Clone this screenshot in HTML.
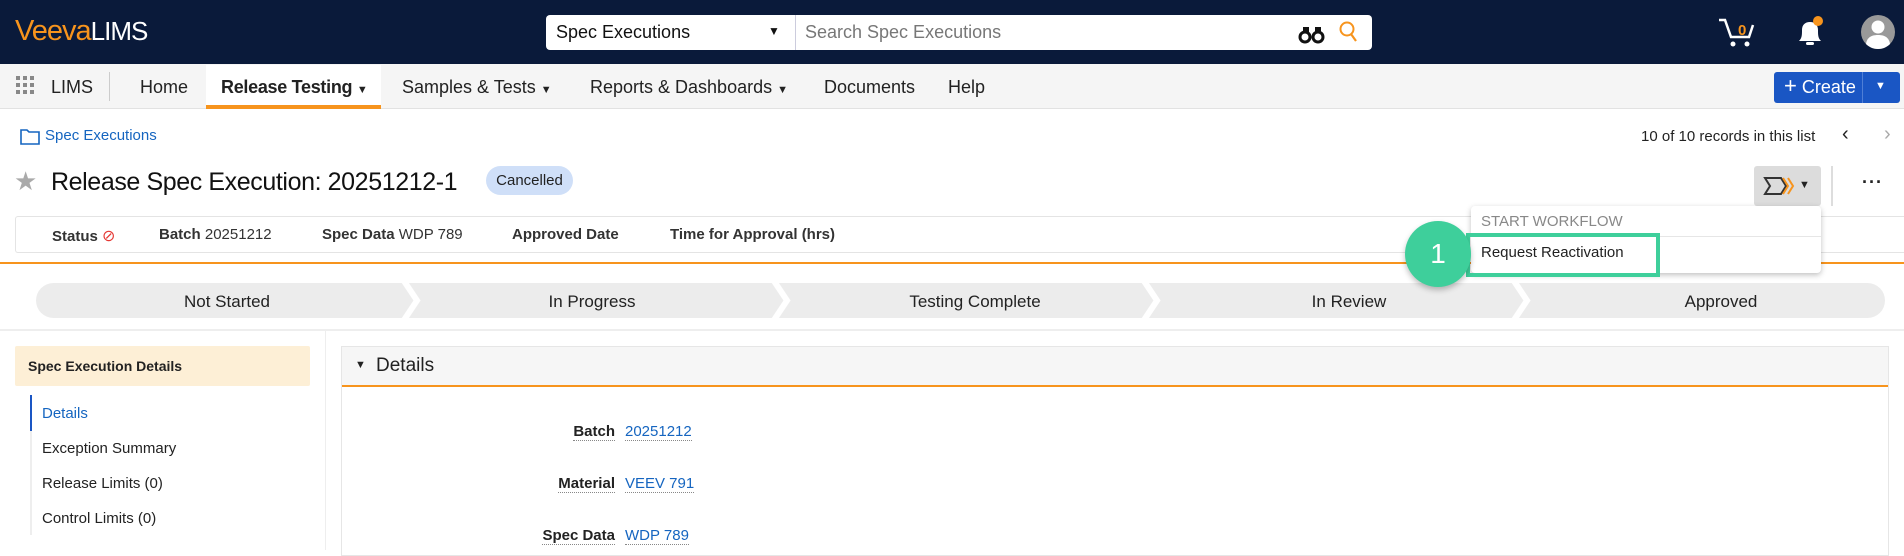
<!DOCTYPE html>
<html><head><meta charset="utf-8"><style>
*{box-sizing:border-box;margin:0;padding:0}
body{width:1904px;height:550px;overflow:hidden;background:#fff;font-family:"Liberation Sans",Arial,sans-serif;color:#222;position:relative}
.a{position:absolute;white-space:nowrap}
.hdr{left:0;top:0;width:1904px;height:64px;background:#0a1a3a}
.nav{left:0;top:64px;width:1904px;height:45px;background:#f5f5f5;border-bottom:1px solid #e2e2e2}
.nt{font-size:18px;color:#222;top:77px}
.lbl{font-size:15px;top:226px;color:#333}
.lbl b{color:#333}
.lnk{color:#1565c0}
.fl{font-size:15px;font-weight:bold;text-align:right;right:1289px;border-bottom:1px dotted #888}
.fv{font-size:15px;color:#1565c0;left:625px;border-bottom:1px dotted #888}
.li{font-size:15px;left:42px}
</style></head><body>
<div class="a hdr"></div>
<div class="a" style="left:15px;top:15px;font-size:29px;color:#f7941d;letter-spacing:-1px">Veeva<span style="color:#fff;font-size:26px;letter-spacing:-1px">LIMS</span></div>
<div class="a" style="left:546px;top:15px;width:826px;height:35px;background:#fff;border-radius:4px"></div>
<div class="a" style="left:795px;top:15px;width:1px;height:35px;background:#ccd"></div>
<div class="a" style="left:556px;top:22px;font-size:18px;color:#111">Spec Executions</div>
<div class="a" style="left:768px;top:24px;font-size:12px;color:#111">▼</div>
<div class="a" style="left:805px;top:22px;font-size:18px;color:#777">Search Spec Executions</div>
<svg class="a" style="left:1298px;top:24px" width="28" height="20" viewBox="0 0 28 20"><circle cx="7" cy="13" r="5" fill="none" stroke="#111" stroke-width="3"/><circle cx="20" cy="13" r="5" fill="none" stroke="#111" stroke-width="3"/><rect x="5" y="3" width="6" height="6" fill="#111"/><rect x="17" y="3" width="6" height="6" fill="#111"/></svg>
<svg class="a" style="left:1338px;top:20px" width="20" height="24" viewBox="0 0 20 24"><circle cx="9" cy="9" r="6.5" fill="none" stroke="#f7941d" stroke-width="2"/><line x1="13" y1="14" x2="18" y2="21" stroke="#f7941d" stroke-width="2.2"/></svg>
<svg class="a" style="left:1717px;top:17px" width="42" height="32" viewBox="0 0 42 32"><path d="M2 3h6l6 17h18l4-12" fill="none" stroke="#fff" stroke-width="2.5"/><circle cx="16" cy="27" r="2.5" fill="#fff"/><circle cx="30" cy="27" r="2.5" fill="#fff"/><text x="21" y="18" font-size="15" font-weight="bold" fill="#f7941d" font-family="Liberation Sans">0</text></svg>
<svg class="a" style="left:1795px;top:15px" width="30" height="34" viewBox="0 0 30 34"><path d="M4 26c3-3 3-6 3-11c0-5 3-8 8-8s8 3 8 8c0 5 0 8 3 11z" fill="#fff"/><rect x="11" y="27" width="8" height="3" rx="1.5" fill="#fff"/><circle cx="23" cy="6" r="5" fill="#f7941d"/></svg>
<svg class="a" style="left:1860px;top:14px" width="36" height="36" viewBox="0 0 36 36"><circle cx="18" cy="18" r="17" fill="#999"/><circle cx="18" cy="13" r="6.5" fill="#fff"/><path d="M6 30c1-7 6-9 12-9s11 2 12 9c-3 3-7 5-12 5s-9-2-12-5z" fill="#fff"/></svg>

<div class="a nav"></div>
<svg class="a" style="left:16px;top:76px" width="18" height="18" viewBox="0 0 18 18" fill="#888"><rect x="0" y="0" width="4" height="4"/><rect x="7" y="0" width="4" height="4"/><rect x="14" y="0" width="4" height="4"/><rect x="0" y="7" width="4" height="4"/><rect x="7" y="7" width="4" height="4"/><rect x="14" y="7" width="4" height="4"/><rect x="0" y="14" width="4" height="4"/><rect x="7" y="14" width="4" height="4"/><rect x="14" y="14" width="4" height="4"/></svg>
<div class="a nt" style="left:51px">LIMS</div>
<div class="a" style="left:109px;top:72px;width:1px;height:29px;background:#ccc"></div>
<div class="a nt" style="left:140px">Home</div>
<div class="a" style="left:206px;top:65px;width:175px;height:44px;background:#fff;border-bottom:4px solid #f7941d"></div>
<div class="a nt" style="left:221px;font-weight:bold;letter-spacing:-.3px">Release Testing <span style="font-size:11px">▼</span></div>
<div class="a nt" style="left:402px">Samples &amp; Tests <span style="font-size:11px">▼</span></div>
<div class="a nt" style="left:590px">Reports &amp; Dashboards <span style="font-size:11px">▼</span></div>
<div class="a nt" style="left:824px">Documents</div>
<div class="a nt" style="left:948px">Help</div>
<div class="a" style="left:1774px;top:72px;width:126px;height:31px;background:#1a56c4;border-radius:3px"></div>
<div class="a" style="left:1862px;top:72px;width:1px;height:31px;background:#4f7fd6"></div>
<div class="a" style="left:1784px;top:76px;font-size:18px;color:#fff"><span style="font-size:22px;line-height:20px">+</span> Create</div>
<div class="a" style="left:1875px;top:80px;font-size:11px;color:#fff">▼</div>

<svg class="a" style="left:20px;top:128px" width="20" height="17" viewBox="0 0 20 17"><path d="M1 2h6l2 2h10v12H1z" fill="none" stroke="#1565c0" stroke-width="1.6"/></svg>
<div class="a lnk" style="left:45px;top:127px;font-size:15px">Spec Executions</div>
<div class="a" style="left:1641px;top:128px;font-size:15px">10 of 10 records in this list</div>
<div class="a" style="left:1842px;top:123px;font-size:20px;color:#222">‹</div>
<div class="a" style="left:1884px;top:123px;font-size:20px;color:#aaa">›</div>

<div class="a" style="left:14px;top:166px;font-size:26px;color:#aaa">★</div>
<div class="a" style="left:51px;top:168px;font-size:25px;letter-spacing:-0.4px;color:#111">Release Spec Execution: 20251212-1</div>
<div class="a" style="left:486px;top:166px;width:87px;height:29px;background:#cfdff8;border-radius:15px;font-size:15px;text-align:center;line-height:29px;color:#222">Cancelled</div>
<div class="a" style="left:1754px;top:166px;width:67px;height:40px;background:#dcdcdc;border-radius:3px"></div>
<svg class="a" style="left:1763px;top:175px" width="32" height="22" viewBox="0 0 32 22"><path d="M2 3h16l5 8l-5 8H2l5-8z" fill="none" stroke="#333" stroke-width="2"/><path d="M20 3l5 8l-5 8M25 3l5 8l-5 8" fill="none" stroke="#f7941d" stroke-width="2"/></svg>
<div class="a" style="left:1799px;top:179px;font-size:11px;color:#222">▼</div>
<div class="a" style="left:1831px;top:166px;width:2px;height:40px;background:#ddd"></div>
<div class="a" style="left:1862px;top:172px;font-size:18px;font-weight:bold;letter-spacing:1px">···</div>

<div class="a" style="left:15px;top:216px;width:1890px;height:37px;border:1px solid #e4e4e4;border-right:none;border-radius:3px 0 0 3px"></div>
<div class="a lbl" style="left:52px"><b>Status</b> <span style="color:#e53935;font-size:16px">⊘</span></div>
<div class="a lbl" style="left:159px"><b>Batch</b> 20251212</div>
<div class="a lbl" style="left:322px"><b>Spec Data</b> WDP 789</div>
<div class="a lbl" style="left:512px"><b>Approved Date</b></div>
<div class="a lbl" style="left:670px"><b>Time for Approval (hrs)</b></div>
<div class="a" style="left:0;top:262px;width:1904px;height:2px;background:#f7941d"></div>

<svg class="a" style="left:0;top:283px" width="1904" height="36"><rect x="36" y="0" width="1849" height="35" rx="17.5" fill="#ececec"/><g fill="none" stroke="#fff" stroke-width="6"><polyline points="404,-2 417,17.5 404,37"/><polyline points="774,-2 787,17.5 774,37"/><polyline points="1144,-2 1157,17.5 1144,37"/><polyline points="1514,-2 1527,17.5 1514,37"/></g>
<g font-family="Liberation Sans" font-size="17" fill="#222" text-anchor="middle"><text x="227" y="24">Not Started</text><text x="592" y="24">In Progress</text><text x="975" y="24">Testing Complete</text><text x="1349" y="24">In Review</text><text x="1721" y="24">Approved</text></g></svg>

<div class="a" style="left:0;top:329px;width:1904px;height:2px;background:#eee"></div>
<div class="a" style="left:325px;top:331px;width:1px;height:219px;background:#eee"></div>
<div class="a" style="left:15px;top:346px;width:295px;height:40px;background:#fdefd6;border-radius:2px"></div>
<div class="a" style="left:28px;top:358px;font-size:14px;font-weight:bold">Spec Execution Details</div>
<div class="a" style="left:30px;top:395px;width:2px;height:140px;background:#eee"></div>
<div class="a" style="left:30px;top:395px;width:2px;height:36px;background:#1a56c4"></div>
<div class="a li lnk" style="top:405px">Details</div>
<div class="a li" style="top:440px">Exception Summary</div>
<div class="a li" style="top:475px">Release Limits (0)</div>
<div class="a li" style="top:510px">Control Limits (0)</div>

<div class="a" style="left:341px;top:346px;width:1548px;height:210px;border:1px solid #e6e6e6"></div>
<div class="a" style="left:342px;top:347px;width:1546px;height:40px;background:#f6f6f6;border-bottom:2px solid #f7941d"></div>
<div class="a" style="left:355px;top:359px;font-size:11px">▼</div>
<div class="a" style="left:376px;top:355px;font-size:19px">Details</div>
<div class="a fl" style="top:423px">Batch</div><div class="a fv" style="top:423px">20251212</div>
<div class="a fl" style="top:475px">Material</div><div class="a fv" style="top:475px">VEEV 791</div>
<div class="a fl" style="top:527px">Spec Data</div><div class="a fv" style="top:527px">WDP 789</div>

<div class="a" style="left:1471px;top:206px;width:350px;height:67px;background:#fff;border-radius:4px;box-shadow:0 2px 6px rgba(0,0,0,.25)"></div>
<div class="a" style="left:1471px;top:236px;width:350px;height:1px;background:#e6e6e6"></div>
<div class="a" style="left:1481px;top:213px;font-size:15px;color:#888">START WORKFLOW</div>
<div class="a" style="left:1466px;top:233px;width:194px;height:44px;border:4px solid #3ecf9b"></div>
<div class="a" style="left:1481px;top:244px;font-size:15px;color:#222">Request Reactivation</div>
<div class="a" style="left:1405px;top:221px;width:66px;height:66px;border-radius:50%;background:#3ecf9b;box-shadow:0 3px 6px rgba(0,0,0,.25);color:#fff;font-size:28px;text-align:center;line-height:66px">1</div>
</body></html>
